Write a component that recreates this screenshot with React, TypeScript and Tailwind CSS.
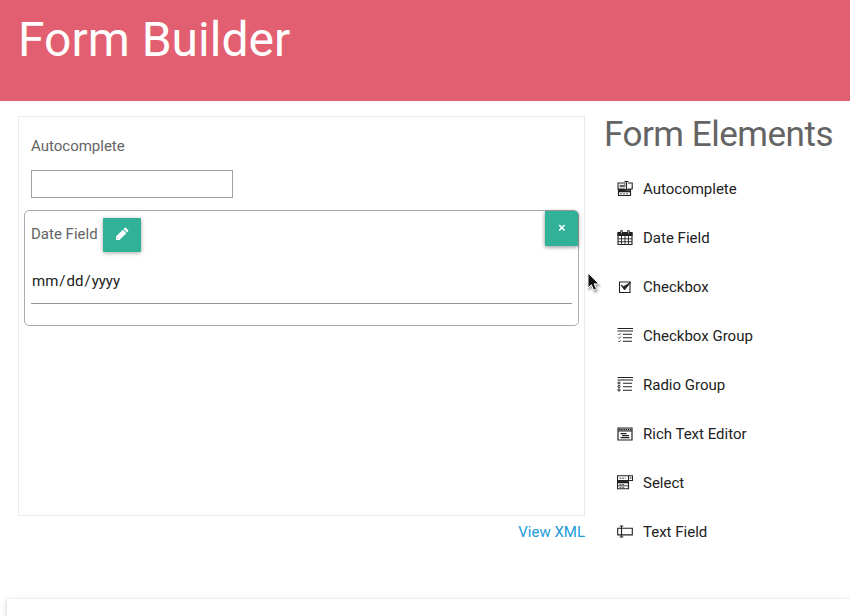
import type { ReactNode } from "react";

function Glyph({ children }: { children: ReactNode }) {
  return (
    <svg width="16" height="16" viewBox="0 0 16 16" fill="none" stroke="#222" className="shrink-0">
      {children}
    </svg>
  );
}

const icons = {
  autocomplete: (
    <Glyph>
      <path d="M8.5 2H1v6h7M11 2h4.2v6H11M9.5.5v8M7.5.5h4M7.5 8.5h5" strokeWidth="1.1" />
      <path d="M3 4.3h1.4v1.5H3zM5.3 4.3h1.4v1.5H5.3zM7.8 2.8v3.5" strokeWidth=".8" />
      <path d="M1 8h6l2 1.3h5v2H1z" fill="#222" stroke="none" />
      <path d="M1.5 8v6.5h12V8" strokeWidth="1.2" />
      <path d="M3 12.8h8" strokeWidth=".8" strokeDasharray="2 1" />
    </Glyph>
  ),
  date: (
    <Glyph>
      <path d="M.5 2h15v4H.5z" fill="#222" stroke="none" />
      <path d="M1 2.5v12h14v-12" strokeWidth="1.1" />
      <path d="M4.5 6v8.5M8 6v8.5M11.5 6v8.5M1 8.8h14M1 11.7h14" strokeWidth=".9" />
      <path d="M4.5 .3v4M11.5 .3v4" strokeWidth="2.4" />
      <path d="M4.5 1.2v2.3M11.5 1.2v2.3" stroke="#fff" strokeWidth=".6" />
    </Glyph>
  ),
  checkbox: (
    <Glyph>
      <path d="M13 3v10.5H2.5V3z" strokeWidth="1.1" />
      <path d="m4 6 2.7 1.4L13.8 3.2 7.5 11z" fill="#222" strokeWidth=".7" />
    </Glyph>
  ),
  checks: (
    <Glyph>
      <path d="M.5.5h15.5M.5 3h15.5M6 6.3h9M6 9.8h9M6 13.3h9" strokeWidth="1.1" />
      <path d="m1.2 6 1 1 1.6-2M1.2 9.5l1 1 1.6-2M1.2 13l1 1 1.6-2" strokeWidth=".7" />
    </Glyph>
  ),
  radios: (
    <Glyph>
      <path d="M.5.5h15.5M.5 3h15.5M6 6.3h9M6 9.8h9M6 13.3h9" strokeWidth="1.1" />
      <circle cx="2" cy="6" r="1.1" />
      <circle cx="2" cy="9.5" r="1.1" />
      <circle cx="2" cy="13" r="1.1" />
    </Glyph>
  ),
  rich: (
    <Glyph>
      <path d="M1 2h14v12H1z" strokeWidth="1.2" />
      <path d="M1 5h14" />
      <path d="M2 3.6h12" strokeDasharray="1.6 .6" strokeWidth="1.8" />
      <path d="M3.5 7.6h6M5 9.6h7M3.5 11.6h9" strokeWidth="1.1" />
    </Glyph>
  ),
  select: (
    <Glyph>
      <path d="M.5.8h15v4.7H.5zM11.5.8v12.9H.5V.8" strokeWidth="1.1" />
      <path d="M1 5.5h10v2.8H1z" fill="#222" stroke="none" />
      <path d="M.5 10.8h11" strokeWidth=".8" />
      <path d="M2.5 3.2h6M2.5 9.6h5M2.5 12.3h5" strokeWidth=".8" strokeDasharray="2 .7" />
      <path d="M12.4 2.5h2.3l-1.15 1.5z" fill="#222" stroke="none" />
    </Glyph>
  ),
  text: (
    <Glyph>
      <path d="M.7 4.3h14.6v6.6H.7zM4.5 2v11M2.7 2h3.6M2.7 13h3.6" strokeWidth="1.1" />
    </Glyph>
  ),
};

const elements: { label: string; icon: ReactNode }[] = [
  { label: "Autocomplete", icon: icons.autocomplete },
  { label: "Date Field", icon: icons.date },
  { label: "Checkbox", icon: icons.checkbox },
  { label: "Checkbox Group", icon: icons.checks },
  { label: "Radio Group", icon: icons.radios },
  { label: "Rich Text Editor", icon: icons.rich },
  { label: "Select", icon: icons.select },
  { label: "Text Field", icon: icons.text },
];

function Header() {
  return (
    <header className="h-[101px] shrink-0 bg-[#e25f71] pl-[18px] pt-3">
      <h1 className="text-[48px] leading-[56px] font-normal whitespace-nowrap text-white">Form Builder</h1>
    </header>
  );
}

function DateCard() {
  return (
    <section className="mx-[5px] mt-3 h-[116px] rounded-[5px] border border-[#aaa]">
      <div className="flex items-start">
        <span className="ml-1.5 mt-[13px] w-[72px] leading-5 whitespace-nowrap text-[#646464]">Date Field</span>
        <button className="mt-[7px] flex h-[34px] w-[38px] items-center justify-center rounded-[1px] bg-[#31b198] shadow-[0_1px_4px_rgba(0,0,0,0.35)]">
          <svg width="14" height="14" viewBox="0 0 14 14" fill="white" className="mb-0.5">
            <path d="m1 9.5 6.8-6.8 3.5 3.5L4.5 13H1z" />
            <path d="m8.5 2 1-1q.8-.8 1.6 0L13 2.9q.8.8 0 1.6l-1 1z" />
            <path d="M2 10.8l1.2 1.2" stroke="#31b198" strokeWidth=".6" />
          </svg>
        </button>
        <button className="ml-auto flex h-[35px] w-[33px] items-center justify-center rounded-tr-[4px] bg-[#31b198] shadow-[0_1px_4px_rgba(0,0,0,0.45)]">
          <svg width="8" height="8" viewBox="0 0 8 8" stroke="white" strokeWidth="1.5" className="mb-px ml-px">
            <path d="m1.2 1 5.3 5.5M6.5 1 1.2 6.5" />
          </svg>
        </button>
      </div>
      <div className="mx-1.5 mt-[12px] flex h-[40px] border-b border-[#949494] pl-px pt-[7px] leading-5 text-[#222]">
        mm<span className="px-px">/</span>dd<span className="px-px">/</span>yyyy
      </div>
    </section>
  );
}

export default function App() {
  return (
    <div className="relative flex h-[616px] w-[850px] flex-col overflow-hidden bg-white font-[Roboto,sans-serif] text-[15px]">
      <Header />
      <main className="flex h-[498px] shrink-0 pl-[18px] pt-[15px]">
        <div className="w-[567px]">
          <div className="h-[400px] border border-[#e9e9e9]">
            <div className="pl-3 pt-[19px]">
              <label className="block leading-5 text-[#646464]">Autocomplete</label>
              <input aria-label="Autocomplete" className="mt-[14px] block h-7 w-[202px] border border-[#a0a0a0]" />
            </div>
            <DateCard />
          </div>
          <a className="mt-1.5 block text-right leading-5 text-[#229bd8]">View XML</a>
        </div>
        <aside className="ml-[19px]">
          <h2 className="pt-px text-[35px] leading-[36px] tracking-[-0.48px] font-normal whitespace-nowrap text-[#646464]">Form Elements</h2>
          <ul className="mt-[11px]">
            {elements.map(({ label, icon }) => (
              <li key={label} className="flex h-[49px] items-center gap-[10px] pl-[13px] text-[#222]">
                {icon}
                <span className="leading-5">{label}</span>
              </li>
            ))}
          </ul>
        </aside>
      </main>
      <footer className="ml-[7px] h-[40px] shrink-0 bg-white shadow-[0_1px_5px_rgba(0,0,0,0.22)]" />
      <svg className="absolute left-[587px] top-[272px] drop-shadow-[1px_2px_1px_rgba(0,0,0,0.4)]" width="14" height="20" viewBox="0 0 14 20">
        <path d="M1 1v15l3.3-3.2 2.4 5.4 2.8-1.3-2.4-5H12z" fill="#111" stroke="white" strokeWidth="1" />
      </svg>
    </div>
  );
}
